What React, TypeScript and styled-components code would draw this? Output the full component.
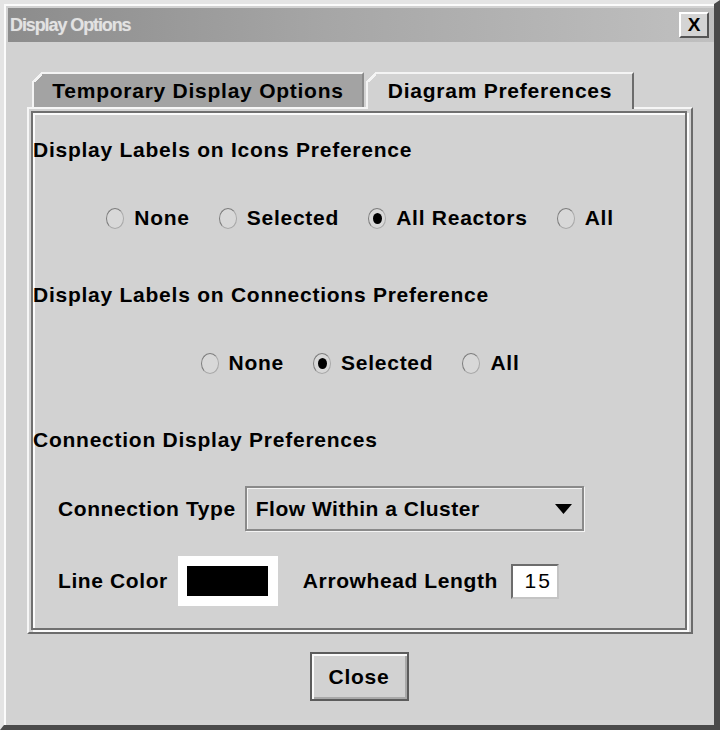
import styled, { createGlobalStyle } from 'styled-components';

const GlobalStyle = createGlobalStyle`
  html, body {
    margin: 0;
    padding: 0;
    background: #d2d2d2;
  }
  * {
    box-sizing: border-box;
  }
`;

const font = `'Liberation Sans', Arial, sans-serif`;

const Frame = styled.div`
  width: 720px;
  height: 730px;
  border-top: 4px solid #e4e4e4;
  border-left: 4px solid #e4e4e4;
  border-right: 6px solid #4a4a4a;
  border-bottom: 5px solid #4a4a4a;
  font-family: ${font};
  color: #000;
`;

const Window = styled.div`
  height: 100%;
  display: flex;
  flex-direction: column;
  border-top: 2px solid #fbfbfb;
  border-left: 2px solid #fbfbfb;
  padding: 2px 0 0 2px;
  background: #d2d2d2;
`;

const TitleBar = styled.div`
  height: 34px;
  display: flex;
  align-items: center;
  justify-content: space-between;
  padding: 0 5px 0 2px;
  background: linear-gradient(90deg, #8c8c8c 0%, #a6a6a6 45%, #c0c0c0 100%);
`;

const Title = styled.span`
  font-size: 18px;
  font-weight: bold;
  letter-spacing: -1.1px;
  color: #e2e2e2;
  text-shadow: 0 0 1px #b0b0b0;
`;

const CloseBox = styled.button`
  width: 30px;
  height: 26px;
  padding: 0;
  margin-top: -1px;
  background: #d4d4d4;
  border: 2px solid;
  border-color: #ffffff #555555 #555555 #ffffff;
  font-family: ${font};
  font-size: 19px;
  font-weight: bold;
  line-height: 20px;
  color: #000;
`;

const Body = styled.div`
  flex: 1;
  display: flex;
  flex-direction: column;
  padding: 30px 21px 24px 19px;
`;

const TabRow = styled.div`
  display: flex;
  height: 35px;
  padding-left: 5px;
  gap: 2px;
`;

const Tab = styled.div<{ $active?: boolean; $width: number }>`
  position: relative;
  width: ${(p) => p.$width}px;
  height: ${(p) => (p.$active ? 37 : 35)}px;
  display: flex;
  align-items: center;
  justify-content: center;
  padding-bottom: ${(p) => (p.$active ? 2 : 0)}px;
  background: ${(p) => (p.$active ? '#d2d2d2' : '#a3a3a3')};
  border-top: 2px solid #f4f4f4;
  border-left: 2px solid #f4f4f4;
  border-right: 2px solid ${(p) => (p.$active ? '#6c6c6c' : '#8a8a8a')};
  font-size: 21px;
  font-weight: bold;
  letter-spacing: 0.75px;
  z-index: ${(p) => (p.$active ? 2 : 1)};

  &::before {
    content: '';
    position: absolute;
    top: -2px;
    left: -2px;
    width: 10px;
    height: 10px;
    background: linear-gradient(
      135deg,
      #d2d2d2 0%,
      #d2d2d2 48%,
      #f4f4f4 48%,
      #f4f4f4 66%,
      transparent 66%
    );
  }
`;

const TabPanel = styled.div`
  position: relative;
  z-index: 1;
  border-top: 2px solid #f6f6f6;
  border-left: 2px solid #f6f6f6;
  border-right: 2px solid #6c6c6c;
  border-bottom: 2px solid #6c6c6c;
  padding: 2px 4px 2px 2px;
`;

const Etched = styled.div`
  display: flex;
  flex-direction: column;
  border: 2px solid #707070;
  box-shadow: inset 2px 2px 0 #fbfbfb, 2px 2px 0 #fbfbfb;
  padding: 0 0 22px 0;
`;

const Heading = styled.div<{ $top: number }>`
  margin-top: ${(p) => p.$top}px;
  height: 24px;
  line-height: 24px;
  font-size: 21px;
  font-weight: bold;
  letter-spacing: 0.75px;
  white-space: nowrap;
`;

const RadioGroup = styled.div<{ $top: number }>`
  margin-top: ${(p) => p.$top}px;
  height: 24px;
  display: flex;
  justify-content: center;
  align-items: center;
  gap: 29px;
  padding-left: 2px;
`;

const RadioItem = styled.label`
  display: flex;
  align-items: center;
  gap: 10px;
  font-size: 21px;
  font-weight: bold;
  letter-spacing: 0.75px;
  white-space: nowrap;
`;

const RadioDot = styled.span<{ $checked?: boolean }>`
  width: 18px;
  height: 21px;
  border-radius: 50%;
  border: 1px solid #7c7c7c;
  border-right-color: #a8a8a8;
  border-bottom-color: #a8a8a8;
  background: #d8d8d8;
  display: flex;
  align-items: center;
  justify-content: center;

  &::after {
    content: '';
    display: ${(p) => (p.$checked ? 'block' : 'none')};
    width: 9px;
    height: 11px;
    border-radius: 50%;
    background: #000;
  }
`;

const FieldRow = styled.div<{ $top: number }>`
  margin-top: ${(p) => p.$top}px;
  display: flex;
  align-items: center;
  padding-left: 25px;
`;

const FieldLabel = styled.span<{ $gap: number }>`
  margin-right: ${(p) => p.$gap}px;
  font-size: 21px;
  font-weight: bold;
  letter-spacing: 0.6px;
  white-space: nowrap;
`;

const Combo = styled.div`
  width: 339px;
  height: 45px;
  display: flex;
  align-items: center;
  justify-content: space-between;
  padding: 0 10px 0 9px;
  border: 2px solid #8a8a8a;
  box-shadow: inset 1px 1px 0 #f4f4f4, 1px 1px 0 #f4f4f4;
  background: #d2d2d2;
  font-size: 21px;
  font-weight: bold;
  letter-spacing: 0.5px;
`;

const Swatch = styled.div`
  width: 100px;
  height: 50px;
  padding: 10px 10px 10px 9px;
  background: #ffffff;
  margin-right: 25px;

  div {
    width: 100%;
    height: 100%;
    background: #000;
  }
`;

const NumberField = styled.div`
  width: 48px;
  height: 35px;
  display: flex;
  align-items: center;
  justify-content: flex-end;
  padding-right: 5px;
  background: #ffffff;
  border: 2px solid;
  border-color: #6c6c6c #c4c4c4 #c4c4c4 #6c6c6c;
  font-size: 21px;
  letter-spacing: 2px;
`;

const Footer = styled.div`
  display: flex;
  justify-content: center;
  margin-top: 18px;
  padding-right: 2px;
`;

const CloseButton = styled.button`
  width: 99px;
  height: 49px;
  padding: 0;
  background: #d2d2d2;
  border: 2px solid #5c5c5c;
  box-shadow: inset 2px 2px 0 #fafafa, inset -2px -2px 0 #a9a9a9;
  font-family: ${font};
  font-size: 21px;
  font-weight: bold;
  letter-spacing: 0.75px;
  color: #000;
`;

const iconOptions = [
  { label: 'None', checked: false },
  { label: 'Selected', checked: false },
  { label: 'All Reactors', checked: true },
  { label: 'All', checked: false },
];

const connectionOptions = [
  { label: 'None', checked: false },
  { label: 'Selected', checked: true },
  { label: 'All', checked: false },
];

export default function App() {
  return (
    <>
      <GlobalStyle />
      <Frame>
        <Window>
          <TitleBar>
            <Title>Display Options</Title>
            <CloseBox>X</CloseBox>
          </TitleBar>
          <Body>
            <TabRow>
              <Tab $width={332}>Temporary Display Options</Tab>
              <Tab $width={268} $active>
                Diagram Preferences
              </Tab>
            </TabRow>
            <TabPanel>
              <Etched>
                <Heading $top={25}>Display Labels on Icons Preference</Heading>
                <RadioGroup $top={44}>
                  {iconOptions.map((o) => (
                    <RadioItem key={o.label}>
                      <RadioDot $checked={o.checked} />
                      {o.label}
                    </RadioItem>
                  ))}
                </RadioGroup>
                <Heading $top={53}>Display Labels on Connections Preference</Heading>
                <RadioGroup $top={44}>
                  {connectionOptions.map((o) => (
                    <RadioItem key={o.label}>
                      <RadioDot $checked={o.checked} />
                      {o.label}
                    </RadioItem>
                  ))}
                </RadioGroup>
                <Heading $top={53}>Connection Display Preferences</Heading>
                <FieldRow $top={34}>
                  <FieldLabel $gap={9}>Connection Type</FieldLabel>
                  <Combo>
                    <span>Flow Within a Cluster</span>
                    <svg width="17" height="10" viewBox="0 0 17 10">
                      <polygon points="0,0 17,0 8.5,10" fill="#000" />
                    </svg>
                  </Combo>
                </FieldRow>
                <FieldRow $top={25}>
                  <FieldLabel $gap={10}>Line Color</FieldLabel>
                  <Swatch>
                    <div />
                  </Swatch>
                  <FieldLabel $gap={13}>Arrowhead Length</FieldLabel>
                  <NumberField>15</NumberField>
                </FieldRow>
              </Etched>
            </TabPanel>
            <Footer>
              <CloseButton>Close</CloseButton>
            </Footer>
          </Body>
        </Window>
      </Frame>
    </>
  );
}
